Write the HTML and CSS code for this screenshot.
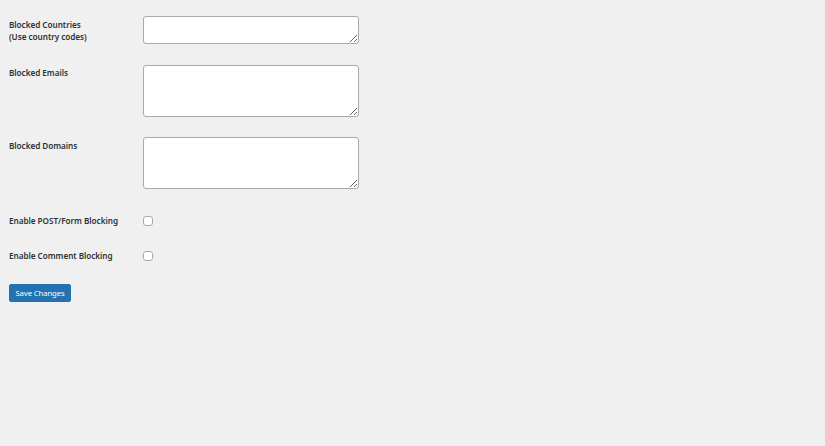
FILE: index.html
```html
<!DOCTYPE html>
<html lang="en">
<head>
<meta charset="utf-8">
<title>Settings</title>
<link rel="stylesheet" href="styles.css">
</head>
<body>
<form class="settings">
  <div class="row row-1">
    <label class="label">Blocked Countries<br>(Use country codes)</label>
    <div class="control"><textarea class="field field-short"></textarea></div>
  </div>
  <div class="row row-2">
    <label class="label">Blocked Emails</label>
    <div class="control"><textarea class="field field-tall"></textarea></div>
  </div>
  <div class="row row-3">
    <label class="label">Blocked Domains</label>
    <div class="control"><textarea class="field field-tall"></textarea></div>
  </div>
  <div class="row row-4">
    <label class="label label-check">Enable POST/Form Blocking</label>
    <div class="control"><span class="checkbox"></span></div>
  </div>
  <div class="row row-5">
    <label class="label label-check">Enable Comment Blocking</label>
    <div class="control"><span class="checkbox"></span></div>
  </div>
  <div class="actions">
    <button type="button" class="button">Save Changes</button>
  </div>
</form>
</body>
</html>
```

FILE: styles.css
```css
html, body {
  margin: 0;
  padding: 0;
  background: #f0f0f1;
}
body {
  width: 825px;
  height: 446px;
  font-family: "Noto Sans", "Open Sans", "DejaVu Sans", sans-serif;
  font-size: 8.2px;
  color: #1d2327;
}
.settings {
  padding: 6px 0 0 9px;
}
.row {
  display: grid;
  grid-template-columns: 134px 216px;
  align-items: start;
}
.row-1 { padding: 10px 0 10px; }
.row-2 { padding: 11px 0 10px; }
.row-3 { padding: 10px 0 10px; }
.row-4 { padding: 17px 0 8px; }
.row-5 { padding: 16px 0 8px; }
.label {
  font-size: 8.2px;
  font-weight: 600;
  line-height: 11.5px;
  margin-top: 3px;
  letter-spacing: -0.05px;
  color: #2c3338;
}
.row-2 .label { margin-top: 2px; }
.label-check { margin-top: -1px; }
.control {
  display: flex;
}
.field {
  box-sizing: border-box;
  width: 216px;
  margin: 0;
  padding: 0;
  background: #fff;
  border: 1px solid #a7aaad;
  border-radius: 3px;
  resize: vertical;
  font-family: inherit;
}
.field-short { height: 28px; }
.field-tall { height: 52px; }
.checkbox {
  box-sizing: border-box;
  width: 10px;
  height: 10px;
  background: #fff;
  border: 1px solid #a7aaad;
  border-radius: 3px;
}
.actions {
  display: flex;
  margin-top: 15px;
}
.button {
  box-sizing: border-box;
  height: 18px;
  width: 62px;
  padding: 0;
  background: #2271b1;
  border: 1px solid #2271b1;
  border-radius: 2px;
  color: #fff;
  font-family: inherit;
  font-size: 7.7px;
  line-height: 16px;
  letter-spacing: -0.1px;
}
```
